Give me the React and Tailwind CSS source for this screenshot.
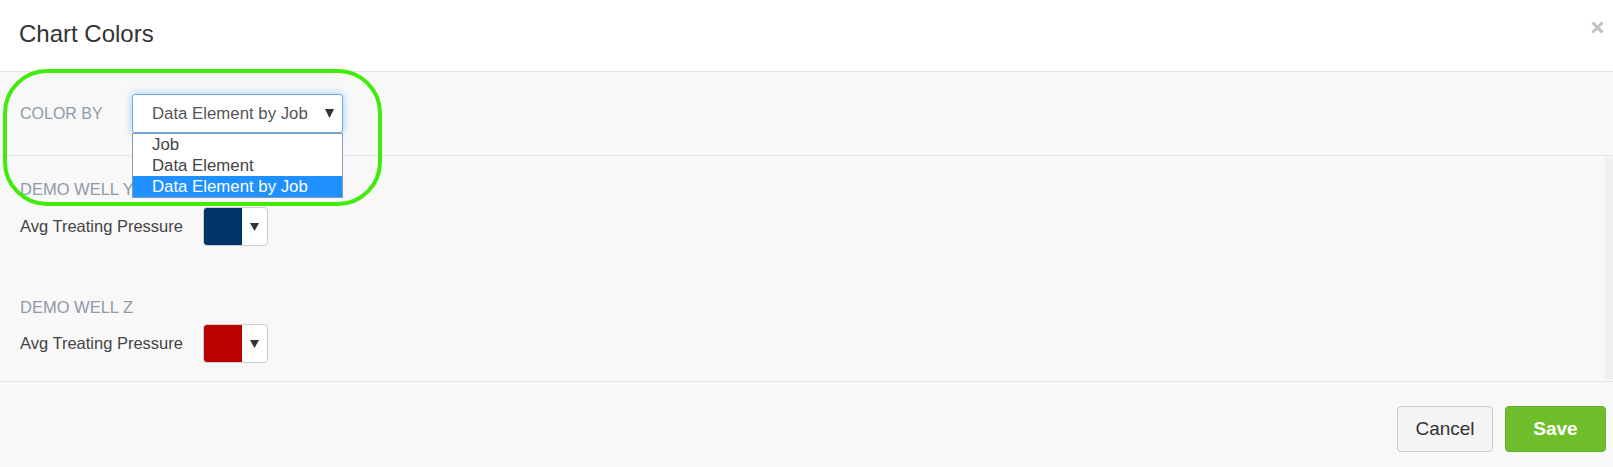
import React from "react";

// Chart colors modal, shown with the "color by" dropdown open
const font = { fontFamily: '"Liberation Sans", Arial, sans-serif' };

const Caret = ({ className }) => (
  <svg viewBox="0 0 10 8" preserveAspectRatio="none" className={className}>
    <path d="M0 0 L10 0 L5 8 Z" fill="currentColor" />
  </svg>
);

const SwatchPicker = ({ color }) => (
  <div className="flex h-[39px] w-[65px] overflow-hidden rounded-[4px] border border-[#cccccc] bg-white">
    <div className={`h-full w-[38px] ${color}`} />
    <div className="flex flex-1 items-center justify-center">
      <Caret className="h-[8px] w-[9px] text-[#333]" />
    </div>
  </div>
);

const Row = ({ color }) => (
  <div className="flex items-center">
    <span className="w-[183px] text-[16.5px] text-[#444]">Avg Treating Pressure</span>
    <SwatchPicker color={color} />
  </div>
);

const App = () => {
  const options = ["Job", "Data Element", "Data Element by Job"];

  return (
    <div className="relative flex h-[467px] w-full flex-col bg-[#f8f8f8]" style={font}>
      {/* header */}
      <div className="flex h-[72px] items-start justify-between border-b border-[#e5e5e5] bg-white pl-[19px] pr-[9px]">
        <h1 className="pt-[20px] text-[24px] leading-[28px] text-[#333]">Chart Colors</h1>
        <button className="mt-[21px] text-[#c2c2c2]">
          <svg viewBox="0 0 13 13" className="h-[13px] w-[13px]">
            <path d="M1.5 1.5 L11.5 11.5 M11.5 1.5 L1.5 11.5" stroke="currentColor" strokeWidth="3" />
          </svg>
        </button>
      </div>

      {/* color by */}
      <div className="flex h-[84px] items-center border-b border-[#e5e5e5] pl-[20px]">
        <span className="w-[112px] text-[16px] text-[#8e9aa7]">COLOR BY</span>
        <div className="relative z-20">
          <div className="flex h-[39px] w-[211px] items-center justify-between rounded-[3px] border border-[#66afe9] bg-white pl-[19px] pr-[8px] shadow-[0_0_8px_rgba(102,175,233,0.6)]">
            <span className="text-[16.8px] text-[#555]">Data Element by Job</span>
            <Caret className="h-[9px] w-[9px] text-[#333]" />
          </div>
          <ul className="absolute left-0 top-full w-[211px] border border-[#7f9db9] bg-white">
            {options.map((o, i) => (
              <li
                key={o}
                className={`h-[21px] pl-[19px] text-[16.8px] leading-[21px] ${
                  i === 2 ? "bg-[#1e90ff] text-white" : "text-[#444]"
                }`}
              >
                {o}
              </li>
            ))}
          </ul>
        </div>
      </div>

      {/* body */}
      <div className="flex h-[226px] border-b border-[#e5e5e5]">
        <div className="flex flex-1 flex-col pl-[20px] pt-[23px]">
          <div className="text-[16.5px] leading-[20px] text-[#8e9aa7]">DEMO WELL Y</div>
          <div className="mt-[8px]">
            <Row color="bg-[#003366]" />
          </div>
          <div className="mt-[51px] text-[16.5px] leading-[20px] text-[#8e9aa7]">DEMO WELL Z</div>
          <div className="mt-[7px]">
            <Row color="bg-[#bb0000]" />
          </div>
        </div>
        <div className="my-[2px] w-[8px] bg-[#f0f0f0]" />
      </div>

      {/* footer */}
      <div className="flex flex-1 items-start justify-end gap-[12px] pr-[7px] pt-[24px]">
        <button className="h-[46px] w-[96px] rounded-[4px] border border-[#cccccc] bg-[#f4f4f4] text-[19px] text-[#333]">
          Cancel
        </button>
        <button className="h-[46px] w-[101px] rounded-[4px] border border-[#66b127] bg-[#6fbe2b] text-[19px] font-bold text-white">
          Save
        </button>
      </div>

      {/* highlight ring drawn over the screenshot */}
      <div className="pointer-events-none absolute left-[3px] top-[69px] z-30 h-[137px] w-[379px] rounded-[44px] border-4 border-[#41ec0c]" />
    </div>
  );
};

export default App;
